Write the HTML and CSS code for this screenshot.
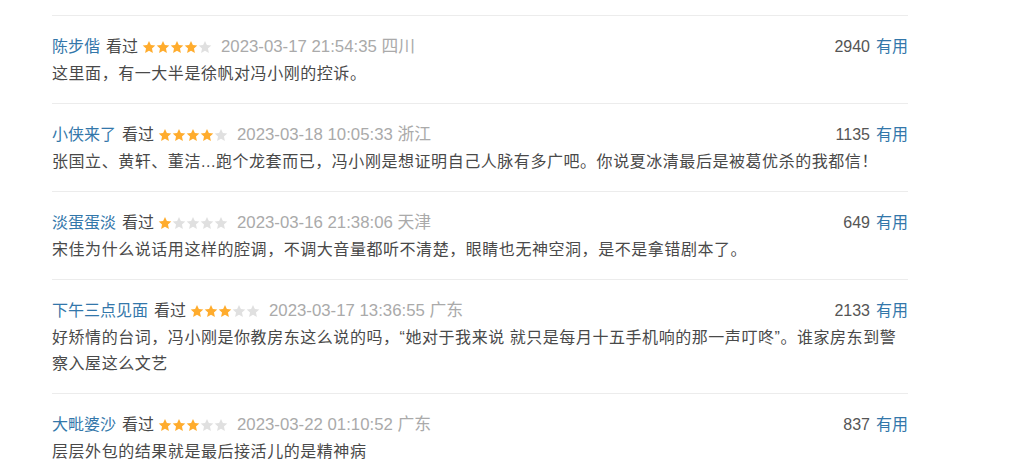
FILE: index.html
```html
<!DOCTYPE html>
<html lang="zh">
<head>
<meta charset="utf-8">
<link rel="stylesheet" href="styles.css">
</head>
<body>
<svg width="0" height="0" class="defs">
  <defs>
    <symbol id="star" viewBox="0 0 24 24"><path d="M12 1.5l3.2 7.1 7.6.8-5.7 5.2 1.6 7.6L12 18.3l-6.7 3.9 1.6-7.6-5.7-5.2 7.6-.8z"/></symbol>
  </defs>
</svg>
<div class="list">
  <div class="item">
    <div class="head">
      <div class="info">
        <a class="name">陈步偕</a><span class="seen">看过</span>
        <span class="stars"><svg class="on"><use href="#star"/></svg><svg class="on"><use href="#star"/></svg><svg class="on"><use href="#star"/></svg><svg class="on"><use href="#star"/></svg><svg class="off"><use href="#star"/></svg></span>
        <span class="time">2023-03-17 21:54:35 四川</span>
      </div>
      <div class="vote"><span class="num">2940</span><a class="useful">有用</a></div>
    </div>
    <p class="text">这里面，有一大半是徐帆对冯小刚的控诉。</p>
  </div>
  <div class="item">
    <div class="head">
      <div class="info">
        <a class="name">小侠来了</a><span class="seen">看过</span>
        <span class="stars"><svg class="on"><use href="#star"/></svg><svg class="on"><use href="#star"/></svg><svg class="on"><use href="#star"/></svg><svg class="on"><use href="#star"/></svg><svg class="off"><use href="#star"/></svg></span>
        <span class="time">2023-03-18 10:05:33 浙江</span>
      </div>
      <div class="vote"><span class="num">1135</span><a class="useful">有用</a></div>
    </div>
    <p class="text">张国立、黄轩、董洁...跑个龙套而已，冯小刚是想证明自己人脉有多广吧。你说夏冰清最后是被葛优杀的我都信！</p>
  </div>
  <div class="item">
    <div class="head">
      <div class="info">
        <a class="name">淡蛋蛋淡</a><span class="seen">看过</span>
        <span class="stars"><svg class="on"><use href="#star"/></svg><svg class="off"><use href="#star"/></svg><svg class="off"><use href="#star"/></svg><svg class="off"><use href="#star"/></svg><svg class="off"><use href="#star"/></svg></span>
        <span class="time">2023-03-16 21:38:06 天津</span>
      </div>
      <div class="vote"><span class="num">649</span><a class="useful">有用</a></div>
    </div>
    <p class="text">宋佳为什么说话用这样的腔调，不调大音量都听不清楚，眼睛也无神空洞，是不是拿错剧本了。</p>
  </div>
  <div class="item">
    <div class="head">
      <div class="info">
        <a class="name">下午三点见面</a><span class="seen">看过</span>
        <span class="stars"><svg class="on"><use href="#star"/></svg><svg class="on"><use href="#star"/></svg><svg class="on"><use href="#star"/></svg><svg class="off"><use href="#star"/></svg><svg class="off"><use href="#star"/></svg></span>
        <span class="time">2023-03-17 13:36:55 广东</span>
      </div>
      <div class="vote"><span class="num">2133</span><a class="useful">有用</a></div>
    </div>
    <p class="text">好矫情的台词，冯小刚是你教房东这么说的吗，“她对于我来说 就只是每月十五手机响的那一声叮咚”。谁家房东到警察入屋这么文艺</p>
  </div>
  <div class="item">
    <div class="head">
      <div class="info">
        <a class="name">大毗婆沙</a><span class="seen">看过</span>
        <span class="stars"><svg class="on"><use href="#star"/></svg><svg class="on"><use href="#star"/></svg><svg class="on"><use href="#star"/></svg><svg class="off"><use href="#star"/></svg><svg class="off"><use href="#star"/></svg></span>
        <span class="time">2023-03-22 01:10:52 广东</span>
      </div>
      <div class="vote"><span class="num">837</span><a class="useful">有用</a></div>
    </div>
    <p class="text">层层外包的结果就是最后接活儿的是精神病</p>
  </div>
</div>
</body>
</html>
```

FILE: styles.css
```css
html, body {
  margin: 0;
  padding: 0;
  background: #fff;
}
body {
  font-family: "Liberation Sans", "Noto Sans CJK SC", sans-serif;
  font-size: 16px;
  color: #494949;
}
.defs {
  position: absolute;
}
.list {
  width: 856px;
  margin-left: 52px;
  padding-top: 15px;
}
.item {
  border-top: 1px solid #ececec;
  padding: 20px 0 16px;
}
.head {
  display: flex;
  justify-content: space-between;
  align-items: center;
  height: 22px;
  line-height: 22px;
}
.info {
  display: flex;
  align-items: center;
  white-space: nowrap;
}
.name {
  color: #3377aa;
  margin-right: 6px;
}
.seen {
  color: #494949;
  margin-right: 4px;
}
.stars {
  display: flex;
  margin-right: 9px;
}
.stars svg {
  width: 14px;
  height: 14px;
}
.stars .on {
  fill: #ffac2d;
}
.stars .off {
  fill: #e0e0e0;
}
.time {
  color: #aaaaaa;
  font-size: 16.8px;
}
.vote {
  display: flex;
  align-items: center;
  white-space: nowrap;
}
.num {
  color: #555;
  margin-right: 6px;
}
.useful {
  color: #3377aa;
}
.text {
  margin: 3px 0 0;
  line-height: 26px;
  letter-spacing: 0.55px;
}
```
